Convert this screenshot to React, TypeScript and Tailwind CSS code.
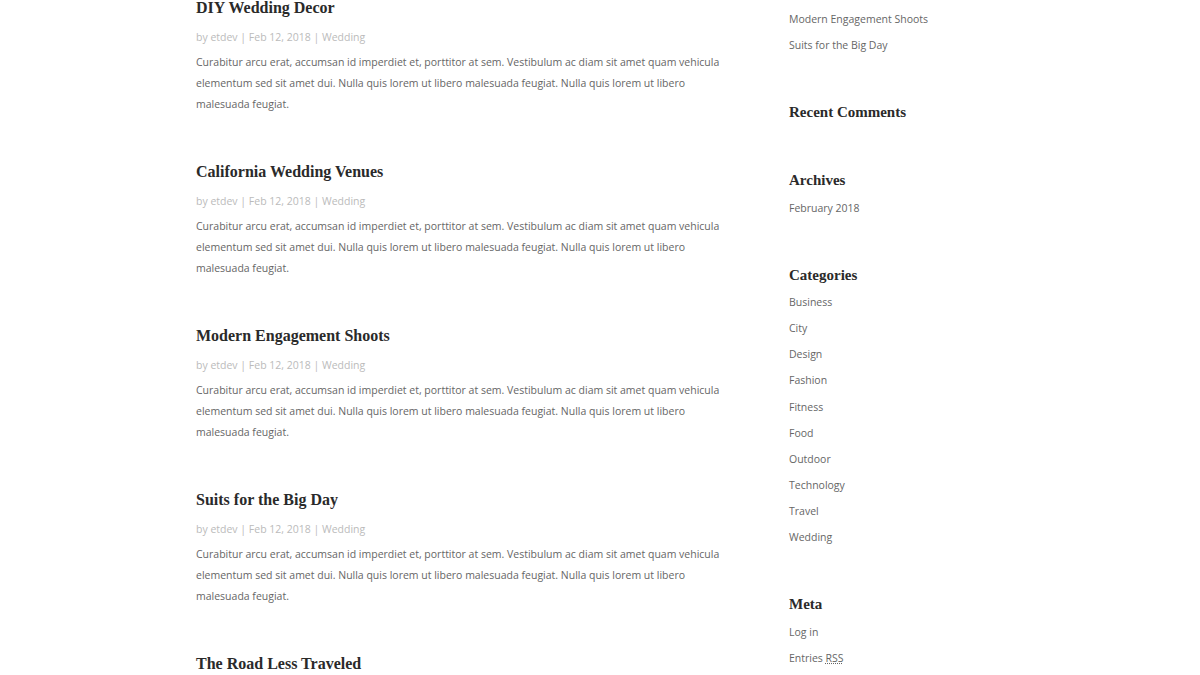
const body = "Curabitur arcu erat, accumsan id imperdiet et, porttitor at sem. Vestibulum ac diam sit amet quam vehicula elementum sed sit amet dui. Nulla quis lorem ut libero malesuada feugiat. Nulla quis lorem ut libero malesuada feugiat.";

const posts = [
  "DIY Wedding Decor",
  "California Wedding Venues",
  "Modern Engagement Shoots",
  "Suits for the Big Day",
  "The Road Less Traveled",
];

const widgets: { title: string | null; items: React.ReactNode[] }[] = [
  { title: null, items: ["Modern Engagement Shoots", "Suits for the Big Day"] },
  { title: "Recent Comments", items: [] },
  { title: "Archives", items: ["February 2018"] },
  {
    title: "Categories",
    items: ["Business", "City", "Design", "Fashion", "Fitness", "Food", "Outdoor", "Technology", "Travel", "Wedding"],
  },
  {
    title: "Meta",
    items: [
      "Log in",
      <span>
        Entries <span className="underline decoration-dotted">RSS</span>
      </span>,
    ],
  },
];

const serif = "font-['Liberation_Serif',serif]";

function Post({ title }: { title: string }) {
  return (
    <article className="pb-[49px]">
      <h2 className={`${serif} h-[16px] text-[16px] leading-[16px] font-bold text-[#2a2a2a]`}>{title}</h2>
      <p className="mt-[11px] h-[20px] text-[10.5px] leading-[20px] text-[#bbb]">
        by etdev | Feb 12, 2018 | Wedding
      </p>
      <p className="mt-[5px] text-[10.5px] leading-[21px] text-[#666]">{body}</p>
    </article>
  );
}

export default function App() {
  return (
    <div className="h-[675px] w-[1200px] overflow-hidden bg-white font-['Open_Sans',sans-serif]">
      <div className="flex">
        <main className="ml-[196px] w-[530px]">
          {posts.map((p) => (
            <Post key={p} title={p} />
          ))}
        </main>
        <aside className="ml-[63px] w-[200px] pt-[7px]">
          {widgets.map((w, i) => (
            <section key={i} className="pb-[43px]">
              {w.title && (
                <h4 className={`${serif} mb-[5px] h-[20px] text-[15px] leading-[20px] font-bold text-[#2a2a2a]`}>
                  {w.title}
                </h4>
              )}
              <ul>
                {w.items.map((it, j) => (
                  <li key={j} className="flex h-[26.2px] items-center text-[10.5px] text-[#666]">
                    {it}
                  </li>
                ))}
              </ul>
            </section>
          ))}
        </aside>
      </div>
    </div>
  );
}
